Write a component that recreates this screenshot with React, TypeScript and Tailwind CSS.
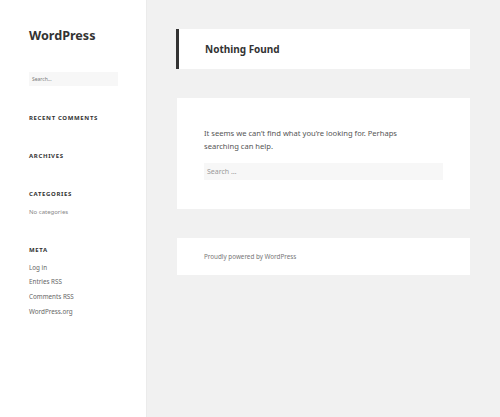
import React from "react";

const font = { fontFamily: '"Noto Sans", "Open Sans", "Liberation Sans", sans-serif' };

function WidgetTitle({ children, className = "" }: { children: React.ReactNode; className?: string }) {
  return (
    <div className={`h-[8px] leading-[8px] text-[6px] font-bold uppercase tracking-[0.65px] text-[#333] ${className}`}>
      {children}
    </div>
  );
}

export default function App() {
  return (
    <div className="flex w-[500px] h-[417px] overflow-hidden bg-[#f1f1f1]" style={font}>
      <aside className="w-[146px] shrink-0 bg-white shadow-[0_0_1px_rgba(0,0,0,0.15)] pt-[29px] px-[29px]">
        <div className="h-[14px] leading-[14px] text-[12.6px] font-bold text-[#333]">WordPress</div>
        <div className="mt-[29px] h-[14px] w-[89px] bg-[#f7f7f7] pl-[3px] text-[5px] leading-[14px] text-[#777]">
          Search…
        </div>
        <WidgetTitle className="mt-[28px]">Recent Comments</WidgetTitle>
        <WidgetTitle className="mt-[30px]">Archives</WidgetTitle>
        <WidgetTitle className="mt-[30px]">Categories</WidgetTitle>
        <div className="mt-[10px] h-[8px] leading-[8px] text-[6px] text-[#888]">No categories</div>
        <WidgetTitle className="mt-[30px]">Meta</WidgetTitle>
        <ul className="mt-[6.5px] text-[6.3px] leading-[14.7px] text-[#666]">
          <li>Log in</li>
          <li>Entries RSS</li>
          <li>Comments RSS</li>
          <li>WordPress.org</li>
        </ul>
      </aside>
      <main className="flex-1 pt-[29px] pl-[30px] pr-[30px]">
        <div className="h-[40px] bg-white border-l-[3px] border-[#333] pl-[26px] flex items-center">
          <h1 className="text-[10px] font-bold text-[#333]">Nothing Found</h1>
        </div>
        <div className="mt-[29px] h-[111px] bg-white pl-[27px] pt-[28.5px] ml-[1px]">
          <p className="text-[7.6px] leading-[13px] text-[#555]">
            It seems we can’t find what you’re looking for. Perhaps
            <br />
            searching can help.
          </p>
          <div className="mt-[10.5px] h-[17px] w-[239px] bg-[#f7f7f7] pl-[3px] text-[7px] leading-[17px] text-[#999]">
            Search …
          </div>
        </div>
        <div className="mt-[29px] h-[37px] bg-white pl-[27px] ml-[1px] flex items-center">
          <span className="text-[6.3px] text-[#777]">Proudly powered by WordPress</span>
        </div>
      </main>
    </div>
  );
}
